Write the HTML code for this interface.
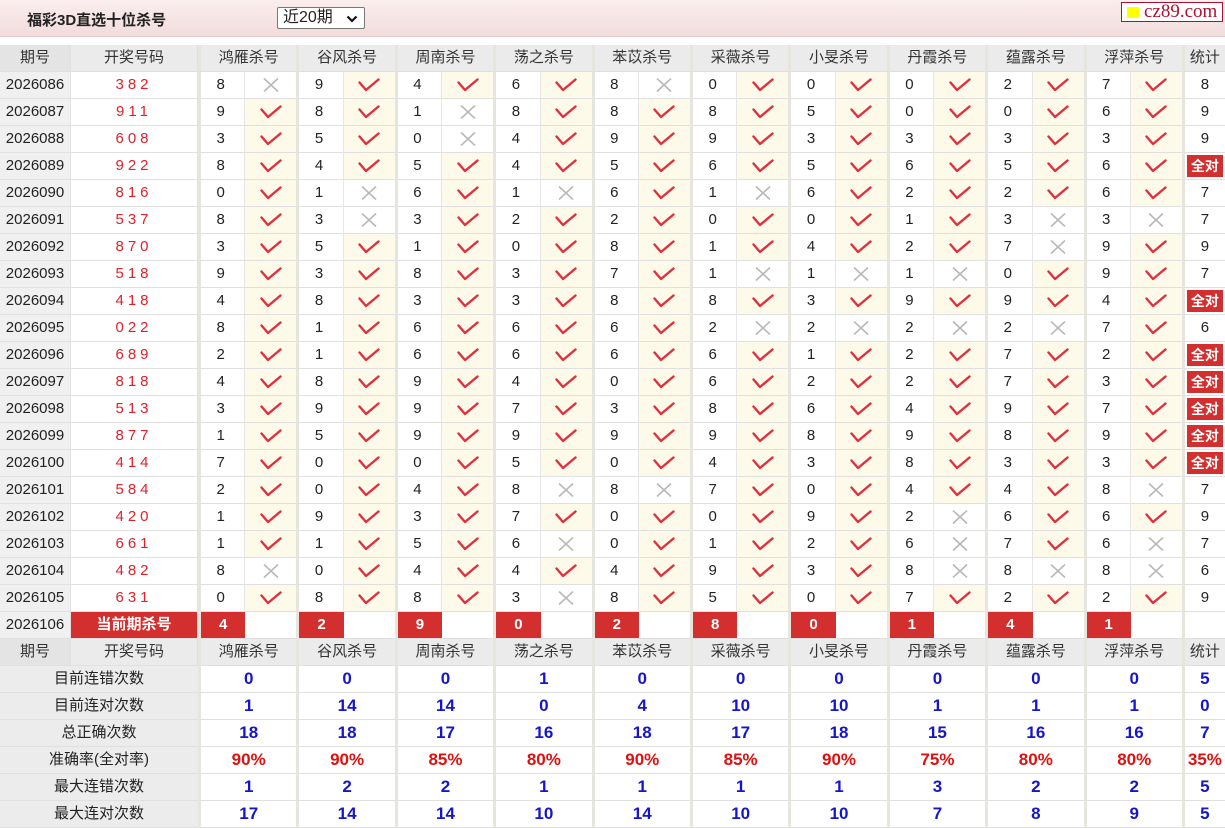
<!DOCTYPE html>
<html><head><meta charset="utf-8"><style>
*{box-sizing:border-box;margin:0;padding:0}
body{width:1225px;height:828px;overflow:hidden;background:#fff;font-family:"Liberation Sans","Noto Sans CJK SC",sans-serif;font-size:15px;color:#222}
.top{position:absolute;left:0;top:0;width:1225px;height:37px;background:linear-gradient(#fbeeee,#f2dcdc);border-bottom:1px solid #e8caca}
.title{position:absolute;left:27px;top:9px;font-weight:bold;font-size:15px;color:#222}
.sel{position:absolute;left:277px;top:7px;width:88px;height:22px;border:1px solid #777;border-radius:2px;background:#fff;font-size:16px;padding-left:5px;line-height:20px}
.sel svg{position:absolute;right:6px;top:7px}
.logo{position:absolute;left:1121px;top:2px;width:102px;height:20px;border:1px solid #b01030;background:#fff;font-family:"Liberation Serif",serif;font-size:19px;color:#b01030;line-height:18px;padding-left:22px}
.logo i{position:absolute;left:5px;top:4px;width:12px;height:11px;background:#ffff00}
.tb{position:absolute;left:0;top:45px;width:1225px}
.r{display:grid;grid-template-columns:71px 127px repeat(10,47.4px 51px) 43px;height:27px}
.r>div{height:27px;border-bottom:1px solid #e0e0e0;text-align:center;line-height:26px;white-space:nowrap;overflow:hidden}
.h>div{background:#ebebeb;color:#333}
.h .g,.s .g{grid-column:span 2;border-left:3px solid #e6e6de}
.q{background:#f0f0f0;border-right:1px solid #e0e0e0}
.h .q{background:#e4e4e4}
.k{color:#e0202a;letter-spacing:4px;border-right:1px solid #e0e0e0}
.n{border-left:3px solid #e6e6de;border-right:1px solid #e6e6e6;padding-right:4px}
.v{background:#fdfaea}
.v svg,.x svg{margin-top:6px}
.t{border-left:3px solid #e6e6de}
.red{background:#d32f2f!important;color:#fff;font-weight:bold;letter-spacing:0}
.rn{background:#d32f2f;color:#fff;font-weight:bold;border-left:3px solid #e6e6de}
.qd{background:#d32f2f;color:#fff;font-weight:bold;font-size:14px;display:inline-block;line-height:22px;width:36px;margin-top:2px}
.s .l{grid-column:span 2;background:#ececec;color:#222}
.s .g{color:#1515cc;font-weight:bold;font-size:17px}
.s .t{color:#1515cc;font-weight:bold;font-size:17px}
.s.p .g,.s.p .t{color:#e01010}
</style></head><body>
<svg style="display:none"><symbol id="c" viewBox="0 0 22 14"><path d="M1.5 4.5 L8 12 L20.5 1.5" fill="none" stroke="#e0303e" stroke-width="2.4" stroke-linecap="round" stroke-linejoin="round"/></symbol><symbol id="x" viewBox="0 0 16 14"><path d="M1 0.5 L15 13.5 M15 0.5 L1 13.5" stroke="#b8b8b8" stroke-width="1.6"/></symbol></svg>
<div class="top"><div class="title">福彩3D直选十位杀号</div><div class="sel">近20期<svg width="12" height="8" viewBox="0 0 12 8"><path d="M1.5 1.5 L6 6 L10.5 1.5" fill="none" stroke="#111" stroke-width="2.2"/></svg></div><div class="logo"><i></i>cz89.com</div></div>
<div class="tb" id="tb">
<div class="r h"><div class="q">期号</div><div style="border-right:1px solid #e0e0e0">开奖号码</div><div class="g">鸿雁杀号</div><div class="g">谷风杀号</div><div class="g">周南杀号</div><div class="g">荡之杀号</div><div class="g">苯苡杀号</div><div class="g">采薇杀号</div><div class="g">小旻杀号</div><div class="g">丹霞杀号</div><div class="g">蕴露杀号</div><div class="g">浮萍杀号</div><div class="t">统计</div></div>
<div class="r"><div class="q">2026086</div><div class="k">382</div><div class="n">8</div><div class="x"><svg width="16" height="14"><use href="#x"/></svg></div><div class="n">9</div><div class="v"><svg width="22" height="14"><use href="#c"/></svg></div><div class="n">4</div><div class="v"><svg width="22" height="14"><use href="#c"/></svg></div><div class="n">6</div><div class="v"><svg width="22" height="14"><use href="#c"/></svg></div><div class="n">8</div><div class="x"><svg width="16" height="14"><use href="#x"/></svg></div><div class="n">0</div><div class="v"><svg width="22" height="14"><use href="#c"/></svg></div><div class="n">0</div><div class="v"><svg width="22" height="14"><use href="#c"/></svg></div><div class="n">0</div><div class="v"><svg width="22" height="14"><use href="#c"/></svg></div><div class="n">2</div><div class="v"><svg width="22" height="14"><use href="#c"/></svg></div><div class="n">7</div><div class="v"><svg width="22" height="14"><use href="#c"/></svg></div><div class="t">8</div></div>
<div class="r"><div class="q">2026087</div><div class="k">911</div><div class="n">9</div><div class="v"><svg width="22" height="14"><use href="#c"/></svg></div><div class="n">8</div><div class="v"><svg width="22" height="14"><use href="#c"/></svg></div><div class="n">1</div><div class="x"><svg width="16" height="14"><use href="#x"/></svg></div><div class="n">8</div><div class="v"><svg width="22" height="14"><use href="#c"/></svg></div><div class="n">8</div><div class="v"><svg width="22" height="14"><use href="#c"/></svg></div><div class="n">8</div><div class="v"><svg width="22" height="14"><use href="#c"/></svg></div><div class="n">5</div><div class="v"><svg width="22" height="14"><use href="#c"/></svg></div><div class="n">0</div><div class="v"><svg width="22" height="14"><use href="#c"/></svg></div><div class="n">0</div><div class="v"><svg width="22" height="14"><use href="#c"/></svg></div><div class="n">6</div><div class="v"><svg width="22" height="14"><use href="#c"/></svg></div><div class="t">9</div></div>
<div class="r"><div class="q">2026088</div><div class="k">608</div><div class="n">3</div><div class="v"><svg width="22" height="14"><use href="#c"/></svg></div><div class="n">5</div><div class="v"><svg width="22" height="14"><use href="#c"/></svg></div><div class="n">0</div><div class="x"><svg width="16" height="14"><use href="#x"/></svg></div><div class="n">4</div><div class="v"><svg width="22" height="14"><use href="#c"/></svg></div><div class="n">9</div><div class="v"><svg width="22" height="14"><use href="#c"/></svg></div><div class="n">9</div><div class="v"><svg width="22" height="14"><use href="#c"/></svg></div><div class="n">3</div><div class="v"><svg width="22" height="14"><use href="#c"/></svg></div><div class="n">3</div><div class="v"><svg width="22" height="14"><use href="#c"/></svg></div><div class="n">3</div><div class="v"><svg width="22" height="14"><use href="#c"/></svg></div><div class="n">3</div><div class="v"><svg width="22" height="14"><use href="#c"/></svg></div><div class="t">9</div></div>
<div class="r"><div class="q">2026089</div><div class="k">922</div><div class="n">8</div><div class="v"><svg width="22" height="14"><use href="#c"/></svg></div><div class="n">4</div><div class="v"><svg width="22" height="14"><use href="#c"/></svg></div><div class="n">5</div><div class="v"><svg width="22" height="14"><use href="#c"/></svg></div><div class="n">4</div><div class="v"><svg width="22" height="14"><use href="#c"/></svg></div><div class="n">5</div><div class="v"><svg width="22" height="14"><use href="#c"/></svg></div><div class="n">6</div><div class="v"><svg width="22" height="14"><use href="#c"/></svg></div><div class="n">5</div><div class="v"><svg width="22" height="14"><use href="#c"/></svg></div><div class="n">6</div><div class="v"><svg width="22" height="14"><use href="#c"/></svg></div><div class="n">5</div><div class="v"><svg width="22" height="14"><use href="#c"/></svg></div><div class="n">6</div><div class="v"><svg width="22" height="14"><use href="#c"/></svg></div><div class="t"><span class="qd">全对</span></div></div>
<div class="r"><div class="q">2026090</div><div class="k">816</div><div class="n">0</div><div class="v"><svg width="22" height="14"><use href="#c"/></svg></div><div class="n">1</div><div class="x"><svg width="16" height="14"><use href="#x"/></svg></div><div class="n">6</div><div class="v"><svg width="22" height="14"><use href="#c"/></svg></div><div class="n">1</div><div class="x"><svg width="16" height="14"><use href="#x"/></svg></div><div class="n">6</div><div class="v"><svg width="22" height="14"><use href="#c"/></svg></div><div class="n">1</div><div class="x"><svg width="16" height="14"><use href="#x"/></svg></div><div class="n">6</div><div class="v"><svg width="22" height="14"><use href="#c"/></svg></div><div class="n">2</div><div class="v"><svg width="22" height="14"><use href="#c"/></svg></div><div class="n">2</div><div class="v"><svg width="22" height="14"><use href="#c"/></svg></div><div class="n">6</div><div class="v"><svg width="22" height="14"><use href="#c"/></svg></div><div class="t">7</div></div>
<div class="r"><div class="q">2026091</div><div class="k">537</div><div class="n">8</div><div class="v"><svg width="22" height="14"><use href="#c"/></svg></div><div class="n">3</div><div class="x"><svg width="16" height="14"><use href="#x"/></svg></div><div class="n">3</div><div class="v"><svg width="22" height="14"><use href="#c"/></svg></div><div class="n">2</div><div class="v"><svg width="22" height="14"><use href="#c"/></svg></div><div class="n">2</div><div class="v"><svg width="22" height="14"><use href="#c"/></svg></div><div class="n">0</div><div class="v"><svg width="22" height="14"><use href="#c"/></svg></div><div class="n">0</div><div class="v"><svg width="22" height="14"><use href="#c"/></svg></div><div class="n">1</div><div class="v"><svg width="22" height="14"><use href="#c"/></svg></div><div class="n">3</div><div class="x"><svg width="16" height="14"><use href="#x"/></svg></div><div class="n">3</div><div class="x"><svg width="16" height="14"><use href="#x"/></svg></div><div class="t">7</div></div>
<div class="r"><div class="q">2026092</div><div class="k">870</div><div class="n">3</div><div class="v"><svg width="22" height="14"><use href="#c"/></svg></div><div class="n">5</div><div class="v"><svg width="22" height="14"><use href="#c"/></svg></div><div class="n">1</div><div class="v"><svg width="22" height="14"><use href="#c"/></svg></div><div class="n">0</div><div class="v"><svg width="22" height="14"><use href="#c"/></svg></div><div class="n">8</div><div class="v"><svg width="22" height="14"><use href="#c"/></svg></div><div class="n">1</div><div class="v"><svg width="22" height="14"><use href="#c"/></svg></div><div class="n">4</div><div class="v"><svg width="22" height="14"><use href="#c"/></svg></div><div class="n">2</div><div class="v"><svg width="22" height="14"><use href="#c"/></svg></div><div class="n">7</div><div class="x"><svg width="16" height="14"><use href="#x"/></svg></div><div class="n">9</div><div class="v"><svg width="22" height="14"><use href="#c"/></svg></div><div class="t">9</div></div>
<div class="r"><div class="q">2026093</div><div class="k">518</div><div class="n">9</div><div class="v"><svg width="22" height="14"><use href="#c"/></svg></div><div class="n">3</div><div class="v"><svg width="22" height="14"><use href="#c"/></svg></div><div class="n">8</div><div class="v"><svg width="22" height="14"><use href="#c"/></svg></div><div class="n">3</div><div class="v"><svg width="22" height="14"><use href="#c"/></svg></div><div class="n">7</div><div class="v"><svg width="22" height="14"><use href="#c"/></svg></div><div class="n">1</div><div class="x"><svg width="16" height="14"><use href="#x"/></svg></div><div class="n">1</div><div class="x"><svg width="16" height="14"><use href="#x"/></svg></div><div class="n">1</div><div class="x"><svg width="16" height="14"><use href="#x"/></svg></div><div class="n">0</div><div class="v"><svg width="22" height="14"><use href="#c"/></svg></div><div class="n">9</div><div class="v"><svg width="22" height="14"><use href="#c"/></svg></div><div class="t">7</div></div>
<div class="r"><div class="q">2026094</div><div class="k">418</div><div class="n">4</div><div class="v"><svg width="22" height="14"><use href="#c"/></svg></div><div class="n">8</div><div class="v"><svg width="22" height="14"><use href="#c"/></svg></div><div class="n">3</div><div class="v"><svg width="22" height="14"><use href="#c"/></svg></div><div class="n">3</div><div class="v"><svg width="22" height="14"><use href="#c"/></svg></div><div class="n">8</div><div class="v"><svg width="22" height="14"><use href="#c"/></svg></div><div class="n">8</div><div class="v"><svg width="22" height="14"><use href="#c"/></svg></div><div class="n">3</div><div class="v"><svg width="22" height="14"><use href="#c"/></svg></div><div class="n">9</div><div class="v"><svg width="22" height="14"><use href="#c"/></svg></div><div class="n">9</div><div class="v"><svg width="22" height="14"><use href="#c"/></svg></div><div class="n">4</div><div class="v"><svg width="22" height="14"><use href="#c"/></svg></div><div class="t"><span class="qd">全对</span></div></div>
<div class="r"><div class="q">2026095</div><div class="k">022</div><div class="n">8</div><div class="v"><svg width="22" height="14"><use href="#c"/></svg></div><div class="n">1</div><div class="v"><svg width="22" height="14"><use href="#c"/></svg></div><div class="n">6</div><div class="v"><svg width="22" height="14"><use href="#c"/></svg></div><div class="n">6</div><div class="v"><svg width="22" height="14"><use href="#c"/></svg></div><div class="n">6</div><div class="v"><svg width="22" height="14"><use href="#c"/></svg></div><div class="n">2</div><div class="x"><svg width="16" height="14"><use href="#x"/></svg></div><div class="n">2</div><div class="x"><svg width="16" height="14"><use href="#x"/></svg></div><div class="n">2</div><div class="x"><svg width="16" height="14"><use href="#x"/></svg></div><div class="n">2</div><div class="x"><svg width="16" height="14"><use href="#x"/></svg></div><div class="n">7</div><div class="v"><svg width="22" height="14"><use href="#c"/></svg></div><div class="t">6</div></div>
<div class="r"><div class="q">2026096</div><div class="k">689</div><div class="n">2</div><div class="v"><svg width="22" height="14"><use href="#c"/></svg></div><div class="n">1</div><div class="v"><svg width="22" height="14"><use href="#c"/></svg></div><div class="n">6</div><div class="v"><svg width="22" height="14"><use href="#c"/></svg></div><div class="n">6</div><div class="v"><svg width="22" height="14"><use href="#c"/></svg></div><div class="n">6</div><div class="v"><svg width="22" height="14"><use href="#c"/></svg></div><div class="n">6</div><div class="v"><svg width="22" height="14"><use href="#c"/></svg></div><div class="n">1</div><div class="v"><svg width="22" height="14"><use href="#c"/></svg></div><div class="n">2</div><div class="v"><svg width="22" height="14"><use href="#c"/></svg></div><div class="n">7</div><div class="v"><svg width="22" height="14"><use href="#c"/></svg></div><div class="n">2</div><div class="v"><svg width="22" height="14"><use href="#c"/></svg></div><div class="t"><span class="qd">全对</span></div></div>
<div class="r"><div class="q">2026097</div><div class="k">818</div><div class="n">4</div><div class="v"><svg width="22" height="14"><use href="#c"/></svg></div><div class="n">8</div><div class="v"><svg width="22" height="14"><use href="#c"/></svg></div><div class="n">9</div><div class="v"><svg width="22" height="14"><use href="#c"/></svg></div><div class="n">4</div><div class="v"><svg width="22" height="14"><use href="#c"/></svg></div><div class="n">0</div><div class="v"><svg width="22" height="14"><use href="#c"/></svg></div><div class="n">6</div><div class="v"><svg width="22" height="14"><use href="#c"/></svg></div><div class="n">2</div><div class="v"><svg width="22" height="14"><use href="#c"/></svg></div><div class="n">2</div><div class="v"><svg width="22" height="14"><use href="#c"/></svg></div><div class="n">7</div><div class="v"><svg width="22" height="14"><use href="#c"/></svg></div><div class="n">3</div><div class="v"><svg width="22" height="14"><use href="#c"/></svg></div><div class="t"><span class="qd">全对</span></div></div>
<div class="r"><div class="q">2026098</div><div class="k">513</div><div class="n">3</div><div class="v"><svg width="22" height="14"><use href="#c"/></svg></div><div class="n">9</div><div class="v"><svg width="22" height="14"><use href="#c"/></svg></div><div class="n">9</div><div class="v"><svg width="22" height="14"><use href="#c"/></svg></div><div class="n">7</div><div class="v"><svg width="22" height="14"><use href="#c"/></svg></div><div class="n">3</div><div class="v"><svg width="22" height="14"><use href="#c"/></svg></div><div class="n">8</div><div class="v"><svg width="22" height="14"><use href="#c"/></svg></div><div class="n">6</div><div class="v"><svg width="22" height="14"><use href="#c"/></svg></div><div class="n">4</div><div class="v"><svg width="22" height="14"><use href="#c"/></svg></div><div class="n">9</div><div class="v"><svg width="22" height="14"><use href="#c"/></svg></div><div class="n">7</div><div class="v"><svg width="22" height="14"><use href="#c"/></svg></div><div class="t"><span class="qd">全对</span></div></div>
<div class="r"><div class="q">2026099</div><div class="k">877</div><div class="n">1</div><div class="v"><svg width="22" height="14"><use href="#c"/></svg></div><div class="n">5</div><div class="v"><svg width="22" height="14"><use href="#c"/></svg></div><div class="n">9</div><div class="v"><svg width="22" height="14"><use href="#c"/></svg></div><div class="n">9</div><div class="v"><svg width="22" height="14"><use href="#c"/></svg></div><div class="n">9</div><div class="v"><svg width="22" height="14"><use href="#c"/></svg></div><div class="n">9</div><div class="v"><svg width="22" height="14"><use href="#c"/></svg></div><div class="n">8</div><div class="v"><svg width="22" height="14"><use href="#c"/></svg></div><div class="n">9</div><div class="v"><svg width="22" height="14"><use href="#c"/></svg></div><div class="n">8</div><div class="v"><svg width="22" height="14"><use href="#c"/></svg></div><div class="n">9</div><div class="v"><svg width="22" height="14"><use href="#c"/></svg></div><div class="t"><span class="qd">全对</span></div></div>
<div class="r"><div class="q">2026100</div><div class="k">414</div><div class="n">7</div><div class="v"><svg width="22" height="14"><use href="#c"/></svg></div><div class="n">0</div><div class="v"><svg width="22" height="14"><use href="#c"/></svg></div><div class="n">0</div><div class="v"><svg width="22" height="14"><use href="#c"/></svg></div><div class="n">5</div><div class="v"><svg width="22" height="14"><use href="#c"/></svg></div><div class="n">0</div><div class="v"><svg width="22" height="14"><use href="#c"/></svg></div><div class="n">4</div><div class="v"><svg width="22" height="14"><use href="#c"/></svg></div><div class="n">3</div><div class="v"><svg width="22" height="14"><use href="#c"/></svg></div><div class="n">8</div><div class="v"><svg width="22" height="14"><use href="#c"/></svg></div><div class="n">3</div><div class="v"><svg width="22" height="14"><use href="#c"/></svg></div><div class="n">3</div><div class="v"><svg width="22" height="14"><use href="#c"/></svg></div><div class="t"><span class="qd">全对</span></div></div>
<div class="r"><div class="q">2026101</div><div class="k">584</div><div class="n">2</div><div class="v"><svg width="22" height="14"><use href="#c"/></svg></div><div class="n">0</div><div class="v"><svg width="22" height="14"><use href="#c"/></svg></div><div class="n">4</div><div class="v"><svg width="22" height="14"><use href="#c"/></svg></div><div class="n">8</div><div class="x"><svg width="16" height="14"><use href="#x"/></svg></div><div class="n">8</div><div class="x"><svg width="16" height="14"><use href="#x"/></svg></div><div class="n">7</div><div class="v"><svg width="22" height="14"><use href="#c"/></svg></div><div class="n">0</div><div class="v"><svg width="22" height="14"><use href="#c"/></svg></div><div class="n">4</div><div class="v"><svg width="22" height="14"><use href="#c"/></svg></div><div class="n">4</div><div class="v"><svg width="22" height="14"><use href="#c"/></svg></div><div class="n">8</div><div class="x"><svg width="16" height="14"><use href="#x"/></svg></div><div class="t">7</div></div>
<div class="r"><div class="q">2026102</div><div class="k">420</div><div class="n">1</div><div class="v"><svg width="22" height="14"><use href="#c"/></svg></div><div class="n">9</div><div class="v"><svg width="22" height="14"><use href="#c"/></svg></div><div class="n">3</div><div class="v"><svg width="22" height="14"><use href="#c"/></svg></div><div class="n">7</div><div class="v"><svg width="22" height="14"><use href="#c"/></svg></div><div class="n">0</div><div class="v"><svg width="22" height="14"><use href="#c"/></svg></div><div class="n">0</div><div class="v"><svg width="22" height="14"><use href="#c"/></svg></div><div class="n">9</div><div class="v"><svg width="22" height="14"><use href="#c"/></svg></div><div class="n">2</div><div class="x"><svg width="16" height="14"><use href="#x"/></svg></div><div class="n">6</div><div class="v"><svg width="22" height="14"><use href="#c"/></svg></div><div class="n">6</div><div class="v"><svg width="22" height="14"><use href="#c"/></svg></div><div class="t">9</div></div>
<div class="r"><div class="q">2026103</div><div class="k">661</div><div class="n">1</div><div class="v"><svg width="22" height="14"><use href="#c"/></svg></div><div class="n">1</div><div class="v"><svg width="22" height="14"><use href="#c"/></svg></div><div class="n">5</div><div class="v"><svg width="22" height="14"><use href="#c"/></svg></div><div class="n">6</div><div class="x"><svg width="16" height="14"><use href="#x"/></svg></div><div class="n">0</div><div class="v"><svg width="22" height="14"><use href="#c"/></svg></div><div class="n">1</div><div class="v"><svg width="22" height="14"><use href="#c"/></svg></div><div class="n">2</div><div class="v"><svg width="22" height="14"><use href="#c"/></svg></div><div class="n">6</div><div class="x"><svg width="16" height="14"><use href="#x"/></svg></div><div class="n">7</div><div class="v"><svg width="22" height="14"><use href="#c"/></svg></div><div class="n">6</div><div class="x"><svg width="16" height="14"><use href="#x"/></svg></div><div class="t">7</div></div>
<div class="r"><div class="q">2026104</div><div class="k">482</div><div class="n">8</div><div class="x"><svg width="16" height="14"><use href="#x"/></svg></div><div class="n">0</div><div class="v"><svg width="22" height="14"><use href="#c"/></svg></div><div class="n">4</div><div class="v"><svg width="22" height="14"><use href="#c"/></svg></div><div class="n">4</div><div class="v"><svg width="22" height="14"><use href="#c"/></svg></div><div class="n">4</div><div class="v"><svg width="22" height="14"><use href="#c"/></svg></div><div class="n">9</div><div class="v"><svg width="22" height="14"><use href="#c"/></svg></div><div class="n">3</div><div class="v"><svg width="22" height="14"><use href="#c"/></svg></div><div class="n">8</div><div class="x"><svg width="16" height="14"><use href="#x"/></svg></div><div class="n">8</div><div class="x"><svg width="16" height="14"><use href="#x"/></svg></div><div class="n">8</div><div class="x"><svg width="16" height="14"><use href="#x"/></svg></div><div class="t">6</div></div>
<div class="r"><div class="q">2026105</div><div class="k">631</div><div class="n">0</div><div class="v"><svg width="22" height="14"><use href="#c"/></svg></div><div class="n">8</div><div class="v"><svg width="22" height="14"><use href="#c"/></svg></div><div class="n">8</div><div class="v"><svg width="22" height="14"><use href="#c"/></svg></div><div class="n">3</div><div class="x"><svg width="16" height="14"><use href="#x"/></svg></div><div class="n">8</div><div class="v"><svg width="22" height="14"><use href="#c"/></svg></div><div class="n">5</div><div class="v"><svg width="22" height="14"><use href="#c"/></svg></div><div class="n">0</div><div class="v"><svg width="22" height="14"><use href="#c"/></svg></div><div class="n">7</div><div class="v"><svg width="22" height="14"><use href="#c"/></svg></div><div class="n">2</div><div class="v"><svg width="22" height="14"><use href="#c"/></svg></div><div class="n">2</div><div class="v"><svg width="22" height="14"><use href="#c"/></svg></div><div class="t">9</div></div>
<div class="r"><div class="q">2026106</div><div class="k red">当前期杀号</div><div class="rn">4</div><div></div><div class="rn">2</div><div></div><div class="rn">9</div><div></div><div class="rn">0</div><div></div><div class="rn">2</div><div></div><div class="rn">8</div><div></div><div class="rn">0</div><div></div><div class="rn">1</div><div></div><div class="rn">4</div><div></div><div class="rn">1</div><div></div><div class="t"></div></div>
<div class="r h"><div class="q">期号</div><div style="border-right:1px solid #e0e0e0">开奖号码</div><div class="g">鸿雁杀号</div><div class="g">谷风杀号</div><div class="g">周南杀号</div><div class="g">荡之杀号</div><div class="g">苯苡杀号</div><div class="g">采薇杀号</div><div class="g">小旻杀号</div><div class="g">丹霞杀号</div><div class="g">蕴露杀号</div><div class="g">浮萍杀号</div><div class="t">统计</div></div>
<div class="r s"><div class="l">目前连错次数</div><div class="g">0</div><div class="g">0</div><div class="g">0</div><div class="g">1</div><div class="g">0</div><div class="g">0</div><div class="g">0</div><div class="g">0</div><div class="g">0</div><div class="g">0</div><div class="t">5</div></div>
<div class="r s"><div class="l">目前连对次数</div><div class="g">1</div><div class="g">14</div><div class="g">14</div><div class="g">0</div><div class="g">4</div><div class="g">10</div><div class="g">10</div><div class="g">1</div><div class="g">1</div><div class="g">1</div><div class="t">0</div></div>
<div class="r s"><div class="l">总正确次数</div><div class="g">18</div><div class="g">18</div><div class="g">17</div><div class="g">16</div><div class="g">18</div><div class="g">17</div><div class="g">18</div><div class="g">15</div><div class="g">16</div><div class="g">16</div><div class="t">7</div></div>
<div class="r s p"><div class="l">准确率(全对率)</div><div class="g">90%</div><div class="g">90%</div><div class="g">85%</div><div class="g">80%</div><div class="g">90%</div><div class="g">85%</div><div class="g">90%</div><div class="g">75%</div><div class="g">80%</div><div class="g">80%</div><div class="t">35%</div></div>
<div class="r s"><div class="l">最大连错次数</div><div class="g">1</div><div class="g">2</div><div class="g">2</div><div class="g">1</div><div class="g">1</div><div class="g">1</div><div class="g">1</div><div class="g">3</div><div class="g">2</div><div class="g">2</div><div class="t">5</div></div>
<div class="r s"><div class="l">最大连对次数</div><div class="g">17</div><div class="g">14</div><div class="g">14</div><div class="g">10</div><div class="g">14</div><div class="g">10</div><div class="g">10</div><div class="g">7</div><div class="g">8</div><div class="g">9</div><div class="t">5</div></div>
</div>
</body></html>
